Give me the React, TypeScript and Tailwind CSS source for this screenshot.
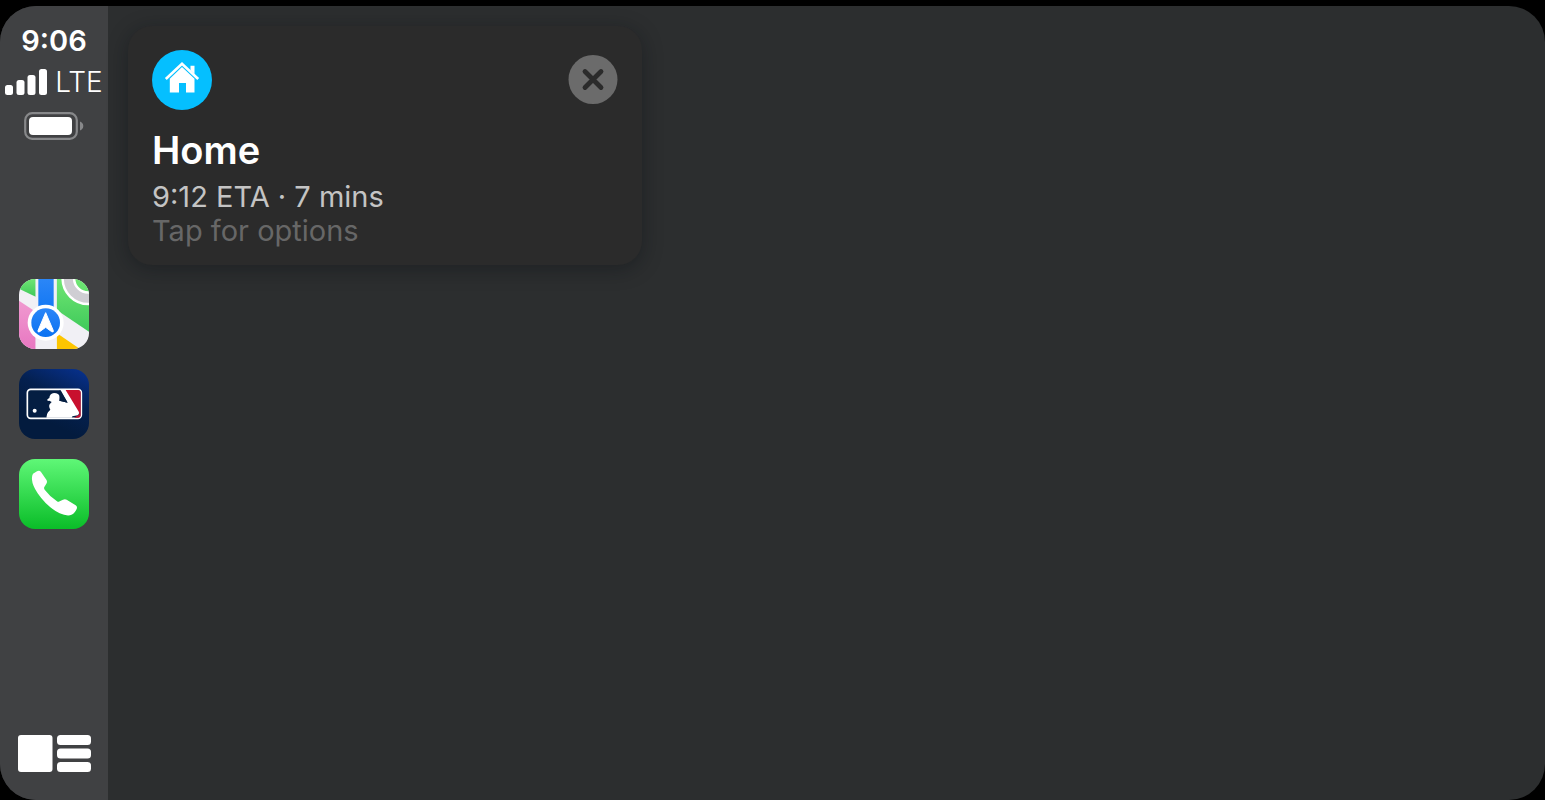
import type { ReactNode } from 'react';

function SignalBars() {
  return (
    <svg viewBox="0 0 42 26" className="w-[42px] h-[26px] fill-white" aria-hidden="true">
      <rect x="0" y="16" width="8" height="10" rx="2.5" />
      <rect x="11.5" y="11" width="8" height="15" rx="2.5" />
      <rect x="22.5" y="6" width="8" height="20" rx="2.5" />
      <rect x="34" y="0" width="8" height="26" rx="2.5" />
    </svg>
  );
}

function Battery() {
  return (
    <svg viewBox="0 0 60 28" className="w-[60px] h-7" role="img" aria-label="Battery">
      <rect x="1.2" y="1.2" width="51.6" height="25.6" rx="7" fill="none" stroke="#87888a" strokeWidth="2.2" />
      <rect x="5" y="5" width="43" height="18" rx="4" fill="#fff" />
      <path d="M56 9.5c2 .7 3.3 2.4 3.3 4.5s-1.3 3.800-3.3 4.500z" fill="#87888a" />
    </svg>
  );
}

function MapsIcon() {
  return (
    <svg viewBox="0 0 210 210" className="size-full" aria-hidden="true">
      <defs>
        <linearGradient id="maps-green" x1="0" y1="0" x2="0" y2="1">
          <stop offset="0" stopColor="#6fe673" />
          <stop offset="1" stopColor="#3fc95a" />
        </linearGradient>
        <linearGradient id="maps-blue" x1="0" y1="0" x2="0" y2="1">
          <stop offset="0" stopColor="#2b86f7" />
          <stop offset="1" stopColor="#0a72f2" />
        </linearGradient>
        <linearGradient id="maps-pink" x1="0" y1="0" x2="0" y2="1">
          <stop offset="0" stopColor="#f09ad0" />
          <stop offset="1" stopColor="#e877c1" />
        </linearGradient>
      </defs>
      <rect width="210" height="210" fill="#f1f0f5" />
      <path d="M0 0H50V53L0 29Z" fill="url(#maps-green)" />
      <path d="M113 0H210V158L113 93Z" fill="url(#maps-green)" />
      <path d="M0 65L50 98V210H0Z" fill="url(#maps-pink)" />
      <path d="M113 162L183 210H113Z" fill="#fdc500" />
      <circle cx="208" cy="-2" r="60" fill="none" stroke="#fff" strokeWidth="42" />
      <circle cx="208" cy="-2" r="60" fill="none" stroke="#cfced3" strokeWidth="27" />
      <rect x="50" width="63" height="210" fill="#f1f0f5" />
      <rect x="58" width="46" height="130" fill="url(#maps-blue)" />
      <circle cx="80" cy="131" r="54" fill="#fff" />
      <circle cx="80" cy="131" r="43" fill="url(#maps-blue)" />
      <path d="M80 101L103 155Q104 161 98 158L80 145L62 158Q56 161 57 155Z" fill="#fff" stroke="#fff" strokeWidth="3" strokeLinejoin="round" />
    </svg>
  );
}

function MlbIcon() {
  return (
    <svg viewBox="0 0 210 210" className="size-full" aria-hidden="true">
      <defs>
        <linearGradient id="mlb-bg" x1="0.9" y1="0" x2="0.5" y2="0.8">
          <stop offset="0" stopColor="#07308c" />
          <stop offset="0.55" stopColor="#04204f" />
          <stop offset="1" stopColor="#031b3e" />
        </linearGradient>
        <clipPath id="mlb-clip">
          <rect x="27" y="63" width="158" height="83" rx="8" />
        </clipPath>
      </defs>
      <rect width="210" height="210" fill="url(#mlb-bg)" />
      <rect x="25" y="61" width="162" height="87" rx="10" fill="#041e42" stroke="#fff" strokeWidth="5" />
      <g clipPath="url(#mlb-clip)">
        <path d="M136 60H190V150H160L182 136Z" fill="#c8102e" />
        {/* Batter */}
        <path
          d="M123 60H138L178 126Q183 134 176 139L160 142L157 150H83Q81 138 87 130L94 122Q88 113 92 106L98 99L91 95L86 96L85 91L91 87Q92 73 105 72Q120 72 123 84Q124 91 121 95L146 101Z"
          fill="#fff"
        />
        <path d="M121 95L146 101L122 62Z" fill="#041e42" />
      </g>
      <circle cx="47" cy="125" r="6" fill="#fff" />
    </svg>
  );
}

function PhoneIcon() {
  return (
    <svg viewBox="0 0 210 210" className="size-full" aria-hidden="true">
      <defs>
        <linearGradient id="phone-bg" x1="0" y1="0" x2="0" y2="1">
          <stop offset="0" stopColor="#5ff777" />
          <stop offset="1" stopColor="#0abd28" />
        </linearGradient>
      </defs>
      <rect width="210" height="210" fill="url(#phone-bg)" />
      <path
        d="M42 44L54 37Q61 33 66 39L82 62Q86 68 82 74L76 84Q74 88 77 92Q93 113 114 127Q118 130 122 127L132 122Q138 119 143 122L170 139Q176 143 173 150Q166 166 153 169Q139 171 122 163Q84 144 56 103Q40 78 39 62Q38 50 42 44Z"
        fill="#fff"
      />
    </svg>
  );
}

function HomeIcon() {
  return (
    <svg viewBox="0 0 60 60" className="size-[60px]" aria-hidden="true">
      <circle cx="30" cy="30" r="30" fill="#05bfff" />
      <path d="M13.8 29L30 13.7L46.2 29" fill="none" stroke="#fff" strokeWidth="2.6" />
      <path d="M38.5 15.800H42.500V24L38.500 20.300Z" fill="#fff" />
      <path d="M30 17L42.5 28.8V42.5H34V33H27V42.5H17.8V28.8Z" fill="#fff" />
    </svg>
  );
}

const apps: { name: string; icon: ReactNode }[] = [
  { name: 'Maps', icon: <MapsIcon /> },
  { name: 'MLB', icon: <MlbIcon /> },
  { name: 'Phone', icon: <PhoneIcon /> },
];

function Sidebar() {
  return (
    <aside className="w-[108px] shrink-0 bg-[#404143] flex flex-col items-center pt-4 pb-7">
      {/* Status */}
      <div className="text-[29px] leading-[38px] font-semibold">9:06</div>
      <div className="flex items-center gap-2 h-11">
        <SignalBars />
        <span className="text-[28px] leading-[34px] font-light">LTE</span>
      </div>
      <div className="mt-2">
        <Battery />
      </div>

      {/* Recent apps */}
      <nav className="mt-[139px] flex flex-col gap-5">
        {apps.map((app) => (
          <button key={app.name} aria-label={app.name} className="size-[70px] rounded-2xl overflow-hidden">
            {app.icon}
          </button>
        ))}
      </nav>

      <button aria-label="Dashboard" className="mt-auto">
        <svg viewBox="0 0 73 37" className="w-[73px] h-[37px] fill-white">
          <rect width="34.500" height="37" rx="3" />
          <rect x="39" width="34" height="10" rx="3.5" />
          <rect x="39" y="13.5" width="34" height="10" rx="3.5" />
          <rect x="39" y="27" width="34" height="10" rx="3.5" />
        </svg>
      </button>
    </aside>
  );
}

function DestinationCard() {
  return (
    <section className="w-[514px] rounded-3xl bg-[#2b2b2b] px-6 pt-6 pb-[17px] shadow-[0_4px_20px_rgba(10,16,20,0.4)]">
      <div className="flex items-center justify-between">
        <HomeIcon />
        <button aria-label="Close">
          <svg viewBox="0 0 50 50" className="size-[50px]">
            <circle cx="25" cy="24.5" r="24.5" fill="#6b6b6b" />
            <path d="M17 16.5L33 32.5M33 16.5L17 32.5" stroke="#2b2b2b" strokeWidth="4.8" strokeLinecap="round" />
          </svg>
        </button>
      </div>
      <h1 className="mt-4 text-[38px] leading-12 font-semibold">Home</h1>
      <p className="mt-1.5 text-[29px] leading-[34px] text-[#c4c4c4]">9:12 ETA · 7 mins</p>
      <p className="text-[29px] leading-[34px] text-[#676767]">Tap for options</p>
    </section>
  );
}

function App() {
  return (
    <div className="min-h-screen bg-black pt-1.5 flex text-white font-[Inter,sans-serif]">
      <div className="flex-1 flex overflow-hidden rounded-[36px] bg-[#2c2e2f]">
        <Sidebar />
        <main className="flex-1 p-5">
          <DestinationCard />
        </main>
      </div>
    </div>
  );
}

export default App;
